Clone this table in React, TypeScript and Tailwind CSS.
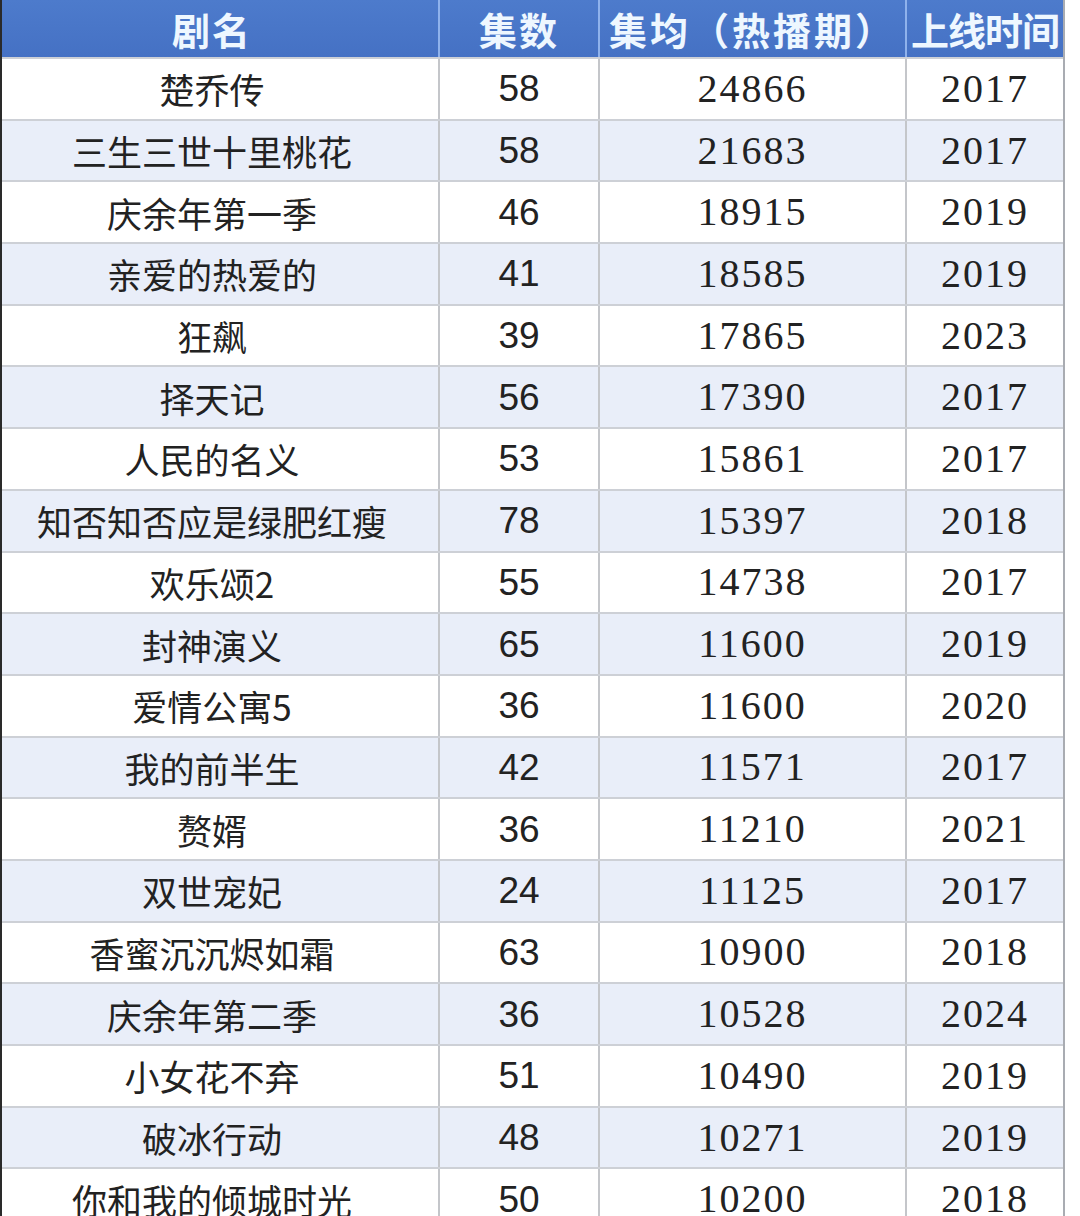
const rows: [string, string, string, string][] = [
  ['楚乔传', '58', '24866', '2017'],
  ['三生三世十里桃花', '58', '21683', '2017'],
  ['庆余年第一季', '46', '18915', '2019'],
  ['亲爱的热爱的', '41', '18585', '2019'],
  ['狂飙', '39', '17865', '2023'],
  ['择天记', '56', '17390', '2017'],
  ['人民的名义', '53', '15861', '2017'],
  ['知否知否应是绿肥红瘦', '78', '15397', '2018'],
  ['欢乐颂2', '55', '14738', '2017'],
  ['封神演义', '65', '11600', '2019'],
  ['爱情公寓5', '36', '11600', '2020'],
  ['我的前半生', '42', '11571', '2017'],
  ['赘婿', '36', '11210', '2021'],
  ['双世宠妃', '24', '11125', '2017'],
  ['香蜜沉沉烬如霜', '63', '10900', '2018'],
  ['庆余年第二季', '36', '10528', '2024'],
  ['小女花不弃', '51', '10490', '2019'],
  ['破冰行动', '48', '10271', '2019'],
  ['你和我的倾城时光', '50', '10200', '2018'],
]

const cjk = "font-['Noto_Sans_CJK_SC','Noto_Sans',sans-serif]"

export default function App() {
  return (
    <div className="flex h-[1216px] w-[1080px] overflow-hidden bg-white">
      <div className="flex w-[1065px] shrink-0 flex-col border-l-2 border-r-2 border-l-[#2a2a2a] border-r-[#a9acb2]">
        {/* header */}
        <div
          className={`grid h-[57px] shrink-0 grid-cols-[436px_160px_307px_158px] bg-gradient-to-b from-[#4d7bcc] to-[#4571c4] text-[38px] font-bold leading-none text-[#eef7ff] ${cjk}`}
        >
          <div className="flex items-center justify-center pr-4 tracking-[2px]">剧名</div>
          <div className="flex items-center justify-center border-l-2 border-[#8fb2ec] tracking-[2px]">集数</div>
          <div className="flex items-center justify-center whitespace-nowrap border-l-2 border-[#8fb2ec] tracking-[3px]">
            集均（热播期）
          </div>
          <div className="flex items-center justify-center whitespace-nowrap border-l-2 border-[#8fb2ec] tracking-[-1px]">
            上线时间
          </div>
        </div>

        {rows.map(([name, eps, avg, year], i) => (
          <div
            key={name}
            className={`grid h-[61.7px] shrink-0 grid-cols-[436px_160px_307px_158px] border-t-2 border-[#cdd0d6] text-[#222] ${
              i % 2 === 1 ? 'bg-[#e9eef9]' : 'bg-white'
            }`}
          >
            <div className={`flex items-center justify-center whitespace-nowrap pr-4 text-[35px] leading-none ${cjk}`}>
              {name}
            </div>
            <div className="flex items-center justify-center border-l-2 border-[#c4c6ca] font-['Liberation_Sans',Arial,sans-serif] text-[37px] leading-none">
              {eps}
            </div>
            <div className="flex items-center justify-center border-l-2 border-[#c4c6ca] font-['Liberation_Serif','Times_New_Roman',serif] text-[40px] leading-none tracking-[2px]">
              {avg}
            </div>
            <div className="flex items-center justify-center border-l-2 border-[#c4c6ca] font-['Liberation_Serif','Times_New_Roman',serif] text-[40px] leading-none tracking-[2px]">
              {year}
            </div>
          </div>
        ))}
      </div>
    </div>
  )
}
